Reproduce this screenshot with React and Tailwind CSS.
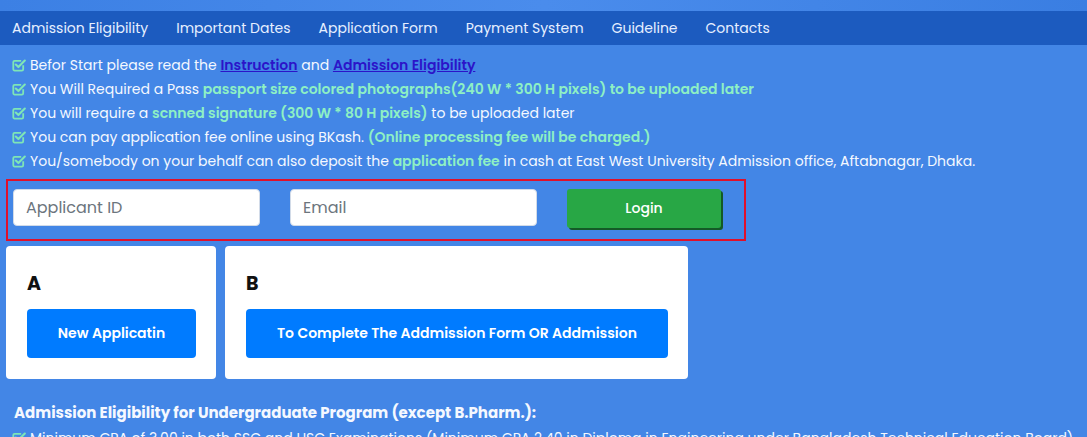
import React from 'react';

const navItems = ['Admission Eligibility', 'Important Dates', 'Application Form', 'Payment System', 'Guideline', 'Contacts'];

function CheckIcon() {
  return (
    <svg width="14" height="14" viewBox="0 0 14 14" className="shrink-0" fill="none">
      <path d="M11.2 7.3V11.3a1.3 1.3 0 0 1-1.3 1.3H2.6a1.3 1.3 0 0 1-1.3-1.3V4.1A1.3 1.3 0 0 1 2.6 2.8h6.6" stroke="#7ee6b6" strokeWidth="1.8" />
      <path d="M3.8 6.5l2.6 2.6 6.4-6.5" stroke="#7ee6b6" strokeWidth="2.1" strokeLinecap="round" strokeLinejoin="round" />
    </svg>
  );
}

function Bullet({ children }) {
  return (
    <li className="flex items-center gap-[4px] h-[24px]">
      <CheckIcon />
      <span>{children}</span>
    </li>
  );
}

const hi = 'text-[#8ef0c4] font-semibold';

export default function App() {
  return (
    <div className="min-h-screen bg-[#4386e6] text-[#f4f8ff] font-['Poppins','Open_Sans',sans-serif] overflow-hidden">
      {/* top strip */}
      <div className="h-[11px] bg-gradient-to-r from-[#3c80e4] via-[#4a8cec] to-[#3a7ee2]" />

      {/* nav */}
      <nav className="h-[34px] bg-[#1c5bbf] flex items-center gap-[28px] pl-[12px] text-[14px] text-[#e6efff]">
        {navItems.map((n) => (
          <span key={n}>{n}</span>
        ))}
      </nav>

      {/* bullets */}
      <ul className="pl-[12px] pt-[8px] text-[14px]">
        <Bullet>
          Befor Start please read the{' '}
          <a className="text-[#2b14c9] underline font-semibold">Instruction</a> and{' '}
          <a className="text-[#2b14c9] underline font-semibold">Admission Eligibility</a>
        </Bullet>
        <Bullet>
          You Will Required a Pass <span className={hi}>passport size colored photographs(240 W * 300 H pixels) to be uploaded later</span>
        </Bullet>
        <Bullet>
          You will require a <span className={hi}>scnned signature (300 W * 80 H pixels)</span> to be uploaded later
        </Bullet>
        <Bullet>
          You can pay application fee online using BKash. <span className={hi}>(Online processing fee will be charged.)</span>
        </Bullet>
        <Bullet>
          You/somebody on your behalf can also deposit the <span className={hi}>application fee</span> in cash at East West University Admission office, Aftabnagar, Dhaka.
        </Bullet>
      </ul>

      {/* login box */}
      <div className="ml-[6px] mt-[6px] w-[740px] h-[62px] border-2 border-[#e0102a] flex items-start pt-[8px] pl-[5px] gap-[30px]">
        <input
          className="w-[247px] h-[37px] bg-white rounded-[4px] border border-[#d2dbe8] px-[12px] text-[16px] text-[#495057] placeholder-[#6c757d] outline-none"
          placeholder="Applicant ID"
        />
        <input
          className="w-[247px] h-[37px] bg-white rounded-[4px] border border-[#d2dbe8] px-[12px] text-[16px] text-[#495057] placeholder-[#6c757d] outline-none"
          placeholder="Email"
        />
        <button className="w-[154px] h-[39px] bg-[#28a745] rounded-[3px] text-white text-[14px] font-medium shadow-[2px_2px_0_#145a26]">
          Login
        </button>
      </div>

      {/* cards */}
      <div className="flex gap-[9px] ml-[6px] mt-[5px]">
        <div className="w-[210px] h-[133px] bg-white rounded-[4px] px-[21px] pt-[26px]">
          <div className="text-[#111] text-[19px] font-bold leading-[24px]">A</div>
          <button className="mt-[13px] w-[169px] h-[49px] bg-[#007bff] rounded-[4px] text-white text-[14px] font-semibold">
            New Applicatin
          </button>
        </div>
        <div className="w-[463px] h-[133px] bg-white rounded-[4px] px-[21px] pt-[26px]">
          <div className="text-[#111] text-[19px] font-bold leading-[24px]">B</div>
          <button className="mt-[13px] w-[422px] h-[49px] bg-[#007bff] rounded-[4px] text-white text-[14px] font-semibold">
            To Complete The Addmission Form OR Addmission
          </button>
        </div>
      </div>

      {/* eligibility */}
      <h3 className="ml-[14px] mt-[23px] text-[15px] font-bold leading-[22px]">
        Admission Eligibility for Undergraduate Program (except B.Pharm.):
      </h3>
      <ul className="pl-[12px] pt-[2px] text-[14px] whitespace-nowrap">
        <Bullet>
          Minimum GPA of 3.00 in both SSC and HSC Examinations (Minimum GPA 2.40 in Diploma in Engineering under Bangladesh Technical Education Board)
        </Bullet>
      </ul>
    </div>
  );
}
